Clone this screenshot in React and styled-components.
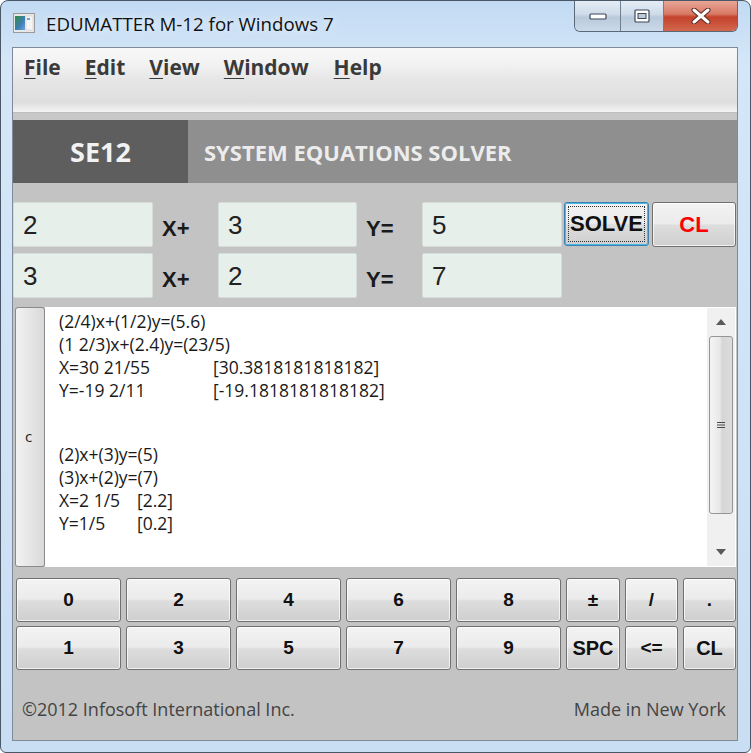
import React from 'react';
import styled, { createGlobalStyle } from 'styled-components';

const GlobalStyle = createGlobalStyle`
  html, body {
    margin: 0;
    padding: 0;
    background: #ffffff;
  }
  * {
    box-sizing: border-box;
  }
`;

const UI_FONT = `"Open Sans", "Noto Sans", sans-serif`;
const ARIAL = `"Liberation Sans", Arial, sans-serif`;

const Window = styled.div`
  width: 751px;
  height: 753px;
  border: 1px solid #4a5767;
  border-radius: 8px 8px 6px 6px;
  background: linear-gradient(180deg, #c1daf3 0%, #d5e6f8 8%, #cfe2f6 60%, #c9ddf3 100%);
  padding: 0 12px 11px 11px;
  display: flex;
  flex-direction: column;
  position: relative;
  overflow: hidden;
`;

const TitleBar = styled.div`
  height: 46px;
  display: flex;
  align-items: flex-start;
  padding-top: 12px;
  padding-left: 1px;
  gap: 11px;
`;

const TitleText = styled.span`
  font-family: ${UI_FONT};
  font-size: 18.7px;
  color: #111;
  line-height: 22px;
  text-shadow: 0 0 8px rgba(255, 255, 255, 0.9);
`;

const Caption = styled.div`
  position: absolute;
  top: -1px;
  right: 12px;
  display: flex;
  height: 32px;
  border: 1px solid #5a6878;
  border-top: none;
  border-radius: 0 0 6px 6px;
  overflow: hidden;
`;

const CaptionButton = styled.div`
  width: ${p => p.$w}px;
  height: 100%;
  display: flex;
  align-items: center;
  justify-content: center;
  border-left: ${p => (p.$first ? 'none' : '1px solid #6f7f90')};
  background: ${p =>
    p.$close
      ? 'linear-gradient(180deg, #e9a99a 0%, #d87a66 45%, #c5422b 55%, #d2684f 100%)'
      : 'linear-gradient(180deg, #e5edf6 0%, #d0dcea 45%, #b9c9dc 55%, #cbd9e8 100%)'};
`;

const Client = styled.div`
  flex: 1;
  border: 1px solid #7d8a98;
  background: #c3c3c3;
  display: flex;
  flex-direction: column;
`;

const MenuBar = styled.div`
  height: 64px;
  background: linear-gradient(180deg, #f8f8f8 0%, #f3f3f3 22%, #e6e6e6 50%, #dedede 85%, #f4f4f4 100%);
  display: flex;
  align-items: flex-start;
  padding: 5px 0 0 11px;
`;

const MenuItem = styled.span`
  font-family: ${UI_FONT};
  font-weight: 700;
  font-size: 21px;
  color: #3a3a3a;
  margin-right: ${p => p.$mr}px;
  u {
    text-decoration-thickness: 1px;
    text-underline-offset: 3px;
  }
`;

const Strip = styled.div`
  height: 8px;
  background: #c8c8c8;
  border-top: 1px solid #bdbdbd;
`;

const Header = styled.div`
  height: 63px;
  display: flex;
  background: #8f8f8f;
`;

const HeaderCode = styled.div`
  width: 175px;
  background: #5e5e5e;
  display: flex;
  align-items: center;
  justify-content: center;
  font-family: ${UI_FONT};
  font-weight: 700;
  font-size: 27px;
  color: #f2f2f2;
`;

const HeaderTitle = styled.div`
  display: flex;
  align-items: center;
  padding-left: 16px;
  font-family: ${UI_FONT};
  font-weight: 700;
  font-size: 22px;
  color: #ececec;
`;

const Form = styled.div`
  padding: 19px 0 0 0;
  display: flex;
  flex-direction: column;
  gap: 6px;
`;

const Row = styled.div`
  height: 45px;
  display: flex;
  align-items: stretch;
`;

const Field = styled.div`
  width: ${p => p.$w}px;
  background: #e6efe9;
  border: 1px solid #d6dcd8;
  border-radius: 2px;
  font-family: ${ARIAL};
  font-size: 26px;
  color: #222;
  padding: 7px 0 0 9px;
`;

const Label = styled.div`
  width: 65px;
  font-family: ${ARIAL};
  font-weight: 700;
  font-size: 22px;
  color: #1a1a1a;
  padding: 14px 0 0 9px;
`;

const Button = styled.button`
  width: ${p => p.$w}px;
  height: ${p => p.$h || 44}px;
  margin-left: ${p => p.$ml || 0}px;
  border: 1px solid #707070;
  border-radius: 3px;
  background: linear-gradient(180deg, #f3f3f3 0%, #ebebeb 48%, #dddddd 52%, #cfcfcf 100%);
  box-shadow: inset 0 0 0 1px rgba(255, 255, 255, 0.7);
  font-family: ${ARIAL};
  font-weight: 700;
  font-size: ${p => p.$fs || 20}px;
  color: ${p => p.$color || '#111'};
  padding: 0;
  display: flex;
  align-items: center;
  justify-content: center;
  cursor: pointer;
`;

const FocusButton = styled(Button)`
  border: 1px solid #3c7fb1;
  box-shadow: inset 0 0 0 1px #48b8e8;
  position: relative;
  &::after {
    content: '';
    position: absolute;
    inset: 3px;
    border: 1px dotted #333;
  }
`;

const Output = styled.div`
  margin: 9px 0 0 2px;
  height: 260px;
  display: flex;
`;

const SideButton = styled.div`
  width: 30px;
  border: 1px solid #8a8a8a;
  border-radius: 3px;
  background: linear-gradient(90deg, #f2f2f2 0%, #e6e6e6 50%, #d9d9d9 100%);
  display: flex;
  align-items: center;
  justify-content: center;
  font-family: ${UI_FONT};
  font-size: 15px;
  color: #222;
  padding: 0 3px 2px 0;
`;

const TextPane = styled.div`
  flex: 1;
  background: #ffffff;
  display: flex;
  margin-right: 1px;
`;

const Lines = styled.div`
  flex: 1;
  padding: 3px 0 0 14px;
  font-family: ${UI_FONT};
  font-size: 17.5px;
  color: #1a1a1a;
  line-height: 23px;
`;

const Line = styled.div`
  white-space: pre;
  display: flex;
`;

const Cell = styled.span`
  display: inline-block;
  width: ${p => p.$w}px;
`;

const Spacer = styled.div`
  height: 41px;
`;

const ScrollBar = styled.div`
  width: 28px;
  margin: 1px 1px 1px 0;
  background: #f0f0f0;
  display: flex;
  flex-direction: column;
  align-items: center;
`;

const Arrow = styled.div`
  height: 28px;
  display: flex;
  align-items: center;
  justify-content: center;
`;

const Thumb = styled.div`
  width: 24px;
  height: 178px;
  border: 1px solid #959595;
  border-radius: 3px;
  background: linear-gradient(90deg, #f4f4f4 0%, #e8e8e8 45%, #d6d6d6 55%, #dcdcdc 100%);
  display: flex;
  align-items: center;
  justify-content: center;
`;

const Track = styled.div`
  flex: 1;
`;

const Keypad = styled.div`
  margin: 11px 0 0 3px;
  display: grid;
  grid-template-columns: repeat(5, 105px) 54px 53px 53px;
  grid-auto-rows: 43px;
  column-gap: 5px;
  row-gap: 5px;
`;

const Footer = styled.div`
  flex: 1;
  display: flex;
  align-items: center;
  justify-content: space-between;
  padding: 8px 11px 0 9px;
  font-family: ${UI_FONT};
  font-size: 18px;
  color: #444;
`;

const AppIcon = () => (
  <svg width="22" height="20" viewBox="0 0 22 20">
    <rect x="0.5" y="0.5" width="21" height="19" fill="#e8e8e8" stroke="#9a9a9a" />
    <rect x="2" y="3" width="10" height="14" fill="url(#g1)" />
    <rect x="13" y="3" width="7" height="14" fill="#f4f4f4" stroke="#c8c8c8" strokeWidth="0.5" />
    <rect x="14" y="5" width="3" height="2" fill="#7aa0c8" />
    <defs>
      <linearGradient id="g1" x1="0" y1="0" x2="1" y2="1">
        <stop offset="0" stopColor="#2e8a3e" />
        <stop offset="0.6" stopColor="#3f7fb8" />
        <stop offset="1" stopColor="#6aa6dc" />
      </linearGradient>
    </defs>
  </svg>
);

const MinIcon = () => (
  <svg width="18" height="10" viewBox="0 0 18 10">
    <rect x="1" y="3" width="16" height="5" rx="1" fill="#ffffff" stroke="#3b4756" strokeWidth="1.2" />
  </svg>
);

const MaxIcon = () => (
  <svg width="16" height="14" viewBox="0 0 16 14">
    <rect x="1" y="1" width="14" height="12" rx="1" fill="#ffffff" stroke="#3b4756" strokeWidth="1.2" />
    <rect x="4" y="4.5" width="8" height="5" fill="#bfcbda" stroke="#3b4756" strokeWidth="1" />
  </svg>
);

const CloseIcon = () => (
  <svg width="20" height="16" viewBox="0 0 20 16">
    <path d="M3 2 L17 14 M17 2 L3 14" stroke="#5a2a22" strokeWidth="5" strokeLinecap="round" />
    <path d="M3 2 L17 14 M17 2 L3 14" stroke="#ffffff" strokeWidth="3" strokeLinecap="round" />
  </svg>
);

const UpArrow = () => (
  <svg width="10" height="6" viewBox="0 0 10 6">
    <path d="M0 6 L5 0 L10 6 Z" fill="#5a5a5a" />
  </svg>
);

const DownArrow = () => (
  <svg width="10" height="6" viewBox="0 0 10 6">
    <path d="M0 0 L5 6 L10 0 Z" fill="#5a5a5a" />
  </svg>
);

const Grip = () => (
  <svg width="8" height="8" viewBox="0 0 8 8">
    <path d="M0 1.5 H8 M0 4 H8 M0 6.5 H8" stroke="#4a4a4a" strokeWidth="1" />
  </svg>
);

const menus = [
  ['F', 'ile', 24],
  ['E', 'dit', 24],
  ['V', 'iew', 24],
  ['W', 'indow', 25],
  ['H', 'elp', 0],
];

const keys = ['0', '2', '4', '6', '8', '±', '/', '.', '1', '3', '5', '7', '9', 'SPC', '<=', 'CL'];

export default function App() {
  return (
    <>
      <GlobalStyle />
      <Window>
        <TitleBar>
          <AppIcon />
          <TitleText>EDUMATTER M-12 for Windows 7</TitleText>
        </TitleBar>
        <Caption>
          <CaptionButton $w={45} $first>
            <MinIcon />
          </CaptionButton>
          <CaptionButton $w={43}>
            <MaxIcon />
          </CaptionButton>
          <CaptionButton $w={74} $close>
            <CloseIcon />
          </CaptionButton>
        </Caption>
        <Client>
          <MenuBar>
            {menus.map(([k, rest, mr]) => (
              <MenuItem key={k} $mr={mr}>
                <u>{k}</u>
                {rest}
              </MenuItem>
            ))}
          </MenuBar>
          <Strip />
          <Header>
            <HeaderCode>SE12</HeaderCode>
            <HeaderTitle>SYSTEM EQUATIONS SOLVER</HeaderTitle>
          </Header>
          <Form>
            <Row>
              <Field $w={140}>2</Field>
              <Label>X+</Label>
              <Field $w={139}>3</Field>
              <Label>Y=</Label>
              <Field $w={140}>5</Field>
              <FocusButton $w={85} $ml={2} $fs={22}>SOLVE</FocusButton>
              <Button $w={84} $ml={3} $h={45} $fs={22} $color="#ff0000">CL</Button>
            </Row>
            <Row>
              <Field $w={140}>3</Field>
              <Label>X+</Label>
              <Field $w={139}>2</Field>
              <Label>Y=</Label>
              <Field $w={140}>7</Field>
            </Row>
          </Form>
          <Output>
            <SideButton>c</SideButton>
            <TextPane>
              <Lines>
                <Line>(2/4)x+(1/2)y=(5.6)</Line>
                <Line>(1 2/3)x+(2.4)y=(23/5)</Line>
                <Line><Cell $w={154}>X=30 21/55</Cell>[30.3818181818182]</Line>
                <Line><Cell $w={154}>Y=-19 2/11</Cell>[-19.1818181818182]</Line>
                <Spacer />
                <Line>(2)x+(3)y=(5)</Line>
                <Line>(3)x+(2)y=(7)</Line>
                <Line><Cell $w={78}>X=2 1/5</Cell>[2.2]</Line>
                <Line><Cell $w={78}>Y=1/5</Cell>[0.2]</Line>
              </Lines>
              <ScrollBar>
                <Arrow><UpArrow /></Arrow>
                <Thumb><Grip /></Thumb>
                <Track />
                <Arrow><DownArrow /></Arrow>
              </ScrollBar>
            </TextPane>
          </Output>
          <Keypad>
            {keys.map(k => (
              <Button key={k} $fs={k === 'SPC' || k === 'CL' ? 20 : 19}>{k}</Button>
            ))}
          </Keypad>
          <Footer>
            <span>©2012 Infosoft International Inc.</span>
            <span>Made in New York</span>
          </Footer>
        </Client>
      </Window>
    </>
  );
}
